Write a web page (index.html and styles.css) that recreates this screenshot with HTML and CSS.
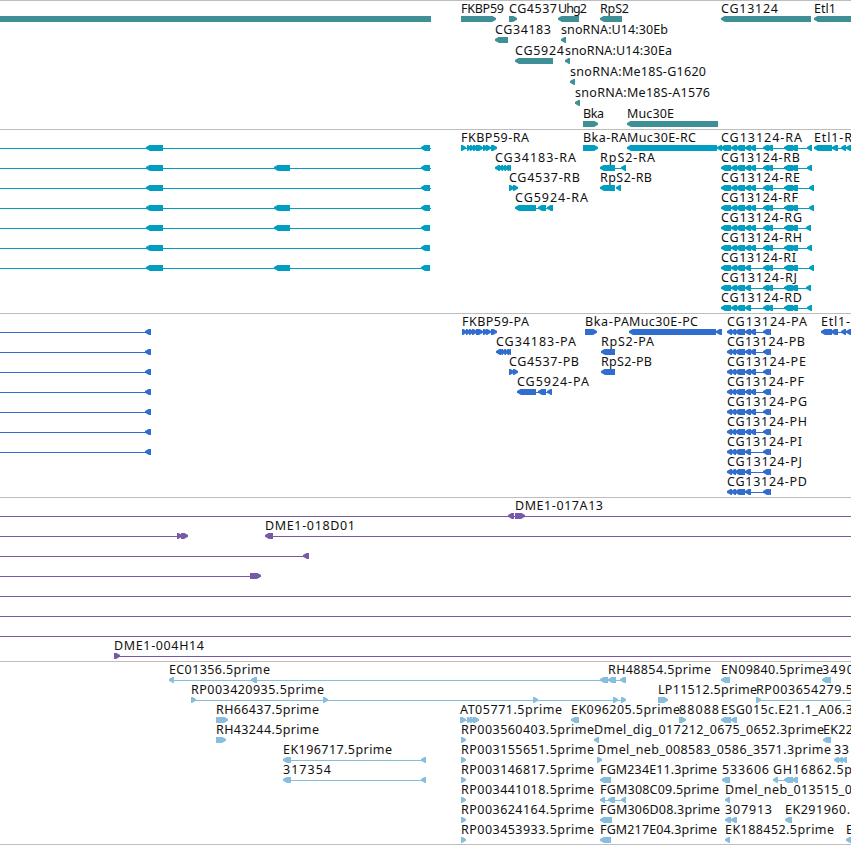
FILE: index.html
```html
<!DOCTYPE html>
<html lang="en">

<head>
    <meta charset="UTF-8">
    <meta name="viewport" content="width=device-width, initial-scale=1.0">
    <title>Genome tracks</title>
    <link rel="stylesheet" href="styles.css">
</head>

<body>
    <main class="browser">
        <section class="track gene" id="gene"></section>
        <section class="track transcript" id="transcript"></section>
        <section class="track protein" id="protein"></section>
        <section class="track clone" id="clone"></section>
        <section class="track est" id="est"></section>
    </main>
    <script src="tracks.js"></script>
</body>

</html>
```

FILE: styles.css
```css
body {
    margin: 0;
    background-color: #fff;
    font-family: "Noto Sans", "Open Sans", sans-serif;
    font-size: 12.5px;
    overflow: hidden;
}

.browser {
    display: flex;
    flex-direction: column;
    width: 851px;
    height: 844px;
    border-bottom: 1px solid #bdbdbd;
}

.track {
    display: flex;
    flex-direction: column;
    box-sizing: border-box;
    flex: none;
    height: 184px;
    border-top: 1px solid #bdbdbd;
}

.row {
    display: block;
    flex: none;
    width: 851px;
    height: 20px;
    overflow: visible;
}

.row text {
    fill: #111;
}

.gene {
    height: 129px;
    fill: #3f8f96;
}

.gene .row {
    height: 21px;
}

.transcript {
    fill: #009fc1;
}

.protein {
    fill: #316dce;
}

.clone {
    height: 164px;
    fill: #7759a8;
}

.est {
    height: 183px;
    fill: #87bddd;
}
```

FILE: tracks.js
```js
// every row: labels [start, end, text], line / box / left / right [start, end]
const geneRows = [
    {
        labels: [[461, 504, 'FKBP59'], [509, 557, 'CG4537'], [558, 587, 'Uhg2'], [600, 629, 'RpS2'], [721, 778, 'CG13124'], [814, 836, 'Etl1']],
        box: [[0, 431]],
        right: [[461, 496], [509, 517]],
        left: [[558, 579], [600, 622], [721, 811], [814, 860]]
    },
    { labels: [[495, 551, 'CG34183'], [561, 668, 'snoRNA:U14:30Eb']], left: [[495, 508], [561, 566]] },
    { labels: [[515, 564, 'CG5924'], [565, 672, 'snoRNA:U14:30Ea']], left: [[515, 553], [565, 570]] },
    { labels: [[570, 706, 'snoRNA:Me18S-G1620']], left: [[570, 575]] },
    { labels: [[575, 710, 'snoRNA:Me18S-A1576']], left: [[575, 580]] },
    { labels: [[583, 604, 'Bka'], [627, 674, 'Muc30E']], right: [[583, 598]], left: [[627, 718]] }
]

const transcriptRows = [
    {
        labels: [[461, 529, 'FKBP59-RA'], [583, 627, 'Bka-RA'], [627, 696, 'Muc30E-RC'], [814, 852, 'Etl1-R']],
        line: [[461, 497], [717, 731], [814, 851]],
        right: [[461, 466], [467, 471], [470, 474], [473, 478], [476, 483], [483, 488], [486, 491], [491, 497], [583, 598]],
        left: [[627, 717], [717, 722], [814, 832], [832, 838], [841, 846], [846, 852]]
    },
    { labels: [[495, 576, 'CG34183-RA'], [600, 655, 'RpS2-RA']], line: [[600, 626]], left: [[495, 500], [499, 503], [502, 506], [505, 509], [507, 511], [600, 615], [621, 626]] },
    { labels: [[509, 580, 'CG4537-RB'], [600, 652, 'RpS2-RB']], right: [[509, 514], [513, 518]], left: [[600, 615], [616, 621]] },
    { labels: [[515, 588, 'CG5924-RA']], line: [[515, 553]], left: [[515, 536], [538, 546], [547, 553]] },
    {}, {}, {}, {}, {}
]

const proteinRows = [
    {
        labels: [[462, 529, 'FKBP59-PA'], [585, 629, 'Bka-PA'], [629, 698, 'Muc30E-PC'], [821, 850, 'Etl1-']],
        line: [[462, 497], [821, 851]],
        right: [[462, 467], [466, 470], [469, 473], [472, 477], [476, 483], [483, 488], [486, 491], [491, 497], [585, 597]],
        left: [[629, 716], [716, 722], [821, 832], [831, 838], [841, 846], [846, 852]]
    },
    { labels: [[496, 576, 'CG34183-PA'], [601, 654, 'RpS2-PA']], left: [[496, 501], [499, 503], [502, 506], [505, 509], [507, 511], [601, 615]] },
    { labels: [[509, 579, 'CG4537-PB'], [601, 652, 'RpS2-PB']], right: [[509, 514], [513, 518]], left: [[601, 615]] },
    { labels: [[517, 589, 'CG5924-PA']], line: [[517, 552]], left: [[517, 536], [538, 546], [547, 552]] },
    {}, {}, {}, {}, {}
]

const cloneRows = [
    { labels: [[515, 603, 'DME1-017A13']], line: [[0, 851]], left: [[508, 514]], right: [[515, 525]] },
    { labels: [[265, 355, 'DME1-018D01']], line: [[0, 188], [265, 851]], left: [[265, 273]], right: [[177, 182], [181, 188]] },
    { line: [[0, 309]], left: [[303, 309]] },
    { line: [[0, 250]], right: [[250, 261]] },
    { line: [[0, 851]] },
    { line: [[0, 851]] },
    { line: [[0, 851]] },
    { labels: [[114, 204, 'DME1-004H14']], line: [[114, 851]], right: [[114, 120]] }
]

const estRows = [
    {
        labels: [[169, 270, 'EC01356.5prime'], [608, 711, 'RH48854.5prime'], [721, 823, 'EN09840.5prime'], [822, 854, '3490']],
        line: [[169, 626]],
        left: [[169, 174], [251, 257], [600, 608], [608, 616], [620, 626], [721, 730], [822, 831]]
    },
    {
        labels: [[191, 324, 'RP003420935.5prime'], [658, 757, 'LP11512.5prime'], [756, 853, 'RP003654279.5']],
        line: [[191, 626], [756, 851]],
        right: [[191, 196], [323, 328], [533, 538], [613, 618], [621, 626], [658, 668], [756, 761]]
    },
    {
        labels: [[216, 319, 'RH66437.5prime'], [460, 562, 'AT05771.5prime'], [571, 680, 'EK096205.5prime'], [679, 719, '88088'], [721, 853, 'ESG015c.E21.1_A06.3']],
        line: [[460, 479]],
        right: [[216, 228], [460, 466], [467, 472], [470, 475], [473, 479], [679, 686]],
        left: [[571, 579], [721, 731], [731, 737]]
    },
    {
        labels: [[216, 319, 'RH43244.5prime'], [461, 594, 'RP003560403.5prime'], [594, 824, 'Dmel_dig_017212_0675_0652.3prime'], [823, 853, 'EK22']],
        right: [[216, 226], [461, 466]],
        left: [[594, 599], [823, 831]]
    },
    {
        labels: [[283, 392, 'EK196717.5prime'], [461, 594, 'RP003155651.5prime'], [597, 831, 'Dmel_neb_008583_0586_3571.3prime'], [834, 849, '33']],
        line: [[283, 426]],
        right: [[461, 466], [597, 602]],
        left: [[283, 291], [421, 426], [834, 839], [838, 843], [842, 847]]
    },
    {
        labels: [[283, 331, '317354'], [461, 594, 'RP003146817.5prime'], [600, 717, 'FGM234E11.3prime'], [722, 769, '533606'], [773, 852, 'GH16862.5p']],
        line: [[283, 426], [773, 798]],
        right: [[461, 466]],
        left: [[283, 291], [421, 426], [600, 611], [722, 730], [773, 778], [784, 793], [792, 798]]
    },
    {
        labels: [[461, 594, 'RP003441018.5prime'], [600, 719, 'FGM308C09.5prime'], [725, 852, 'Dmel_neb_013515_0']],
        line: [[600, 626]],
        right: [[461, 466]],
        left: [[600, 605], [608, 615], [621, 626], [725, 730]]
    },
    {
        labels: [[461, 594, 'RP003624164.5prime'], [600, 720, 'FGM306D08.3prime'], [725, 772, '307913'], [785, 850, 'EK291960.']],
        right: [[461, 466]],
        left: [[600, 612], [725, 731], [731, 737], [785, 792]]
    },
    {
        labels: [[461, 594, 'RP003453933.5prime'], [600, 717, 'FGM217E04.3prime'], [725, 834, 'EK188452.5prime'], [846, 853, 'E']],
        right: [[461, 466]],
        left: [[600, 611], [725, 730], [846, 852]]
    }
]

function add(row, key, items) {
    row[key] = (row[key] || []).concat(items)
}

// the long gene on the left has seven isoforms
for (let i = 0; i < 7; i++) {
    add(transcriptRows[i], 'line', [[0, i < 4 ? 431 : 430]])
    add(transcriptRows[i], 'left', [[146, 163], [421, 430]])
    if ([1, 3, 4, 6].includes(i)) {
        add(transcriptRows[i], 'left', [[274, 290]])
    }
    add(proteinRows[i], 'line', [[0, 151]])
    add(proteinRows[i], 'left', [[145, 151]])
}

// CG13124 isoforms: letter, transcript end, transcript label end, protein label end
const isoforms = [
    ['A', 812, 802, 807], ['B', 812, 800, 805], ['E', 814, 800, 806],
    ['F', 814, 798, 804], ['G', 811, 802, 807], ['H', 812, 802, 807],
    ['I', 814, 796, 802], ['J', 811, 797, 802], ['D', 812, 802, 807]
]
isoforms.forEach(([letter, end, labelR, labelP], i) => {
    add(transcriptRows[i], 'labels', [[721, labelR, 'CG13124-R' + letter]])
    add(transcriptRows[i], 'line', [[721, end]])
    add(transcriptRows[i], 'left', [[721, 731], [731, 737], [736, 745], [745, 751], [763, 769], [767, 773], [784, 793], [791, 798], [end - 5, end]])
    add(proteinRows[i], 'labels', [[727, labelP, 'CG13124-P' + letter]])
    add(proteinRows[i], 'line', [[727, 771]])
    add(proteinRows[i], 'left', [[727, 732], [731, 736], [735, 745], [745, 751], [763, 769], [766, 771]])
    if (i < 6) {
        add(transcriptRows[i], 'left', [[750, 756]])
        add(proteinRows[i], 'left', [[750, 756]])
    }
})

function rect(x1, x2, y, h) {
    return `<rect x="${x1}" y="${y}" width="${x2 - x1}" height="${h}"/>`
}

// tip is where the arrow points, back is the flat end
function arrow(tip, back) {
    const dir = back > tip ? 1 : -1
    const head = Math.min(5, Math.abs(back - tip)) * dir
    return `<polygon points="${tip},17 ${tip + head * 0.7},15 ${back},15 ${back},21 ${tip + head * 0.8},21 ${tip},18.7"/>`
}

function draw(id, rows) {
    document.getElementById(id).innerHTML = rows.map(row => {
        const { labels = [], line = [], box = [], left = [], right = [] } = row
        return '<svg class="row">' +
            line.map(([a, b]) => rect(a, b, 18, 1)).join('') +
            box.map(([a, b]) => rect(a, b, 15, 6)).join('') +
            left.map(([a, b]) => arrow(a, b)).join('') +
            right.map(([a, b]) => arrow(b, a)).join('') +
            labels.map(([a, b, text]) => `<text x="${a}" y="12" textLength="${b - a}">${text}</text>`).join('') +
            '</svg>'
    }).join('')
}

draw('gene', geneRows)
draw('transcript', transcriptRows)
draw('protein', proteinRows)
draw('clone', cloneRows)
draw('est', estRows)
```
